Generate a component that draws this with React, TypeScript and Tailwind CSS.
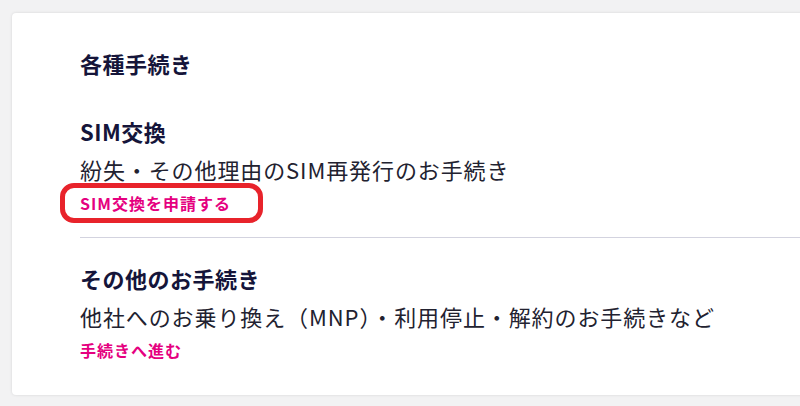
const FONT = {
  fontFamily: '"Noto Sans CJK JP", "Noto Sans", sans-serif',
};

interface Procedure {
  title: string;
  description: string;
  link: string;
  highlighted?: boolean;
}

const PROCEDURES: Procedure[] = [
  {
    title: "SIM交換",
    description: "紛失・その他理由のSIM再発行のお手続き",
    link: "SIM交換を申請する",
    highlighted: true,
  },
  {
    title: "その他のお手続き",
    description: "他社へのお乗り換え（MNP）・利用停止・解約のお手続きなど",
    link: "手続きへ進む",
  },
];

function ProcedureItem({ item }: { item: Procedure }) {
  return (
    <div className="flex flex-col">
      <h3 className="text-[22px] leading-[32px] font-bold tracking-[0.5px] text-[#15153a]">
        {item.title}
      </h3>
      <p className="mt-[6px] text-[22px] leading-[32px] tracking-[0.9px] text-[#222230]">
        {item.description}
      </p>
      <div className="mt-[6px] flex">
        <a
          href="#"
          className="relative text-[16px] leading-[24px] font-bold tracking-[1px] text-[#e5007f]"
        >
          {item.link}
          {item.highlighted && (
            <span className="pointer-events-none absolute left-[-20px] top-[-8px] h-[40px] w-[203px] rounded-[14px] border-[5px] border-[#e8232b]" />
          )}
        </a>
      </div>
    </div>
  );
}

export default function App() {
  return (
    <div
      className="h-[406px] w-[800px] overflow-hidden bg-[#f2f2f3] pl-[12px] pt-[13px]"
      style={FONT}
    >
      <div className="w-[810px] rounded-[4px] bg-white pl-[68px] pt-[34px] pb-[33px] shadow-[0_0_3px_rgba(0,0,0,0.12)]">
        <h2 className="text-[22px] leading-[32px] font-bold tracking-[0.5px] text-[#15153a]">
          各種手続き
        </h2>

        <div className="mt-[36px]">
          <ProcedureItem item={PROCEDURES[0]} />
        </div>

        <div className="mt-[22px] h-px bg-[#d3d3df]" />

        <div className="mt-[24px]">
          <ProcedureItem item={PROCEDURES[1]} />
        </div>
      </div>
    </div>
  );
}
